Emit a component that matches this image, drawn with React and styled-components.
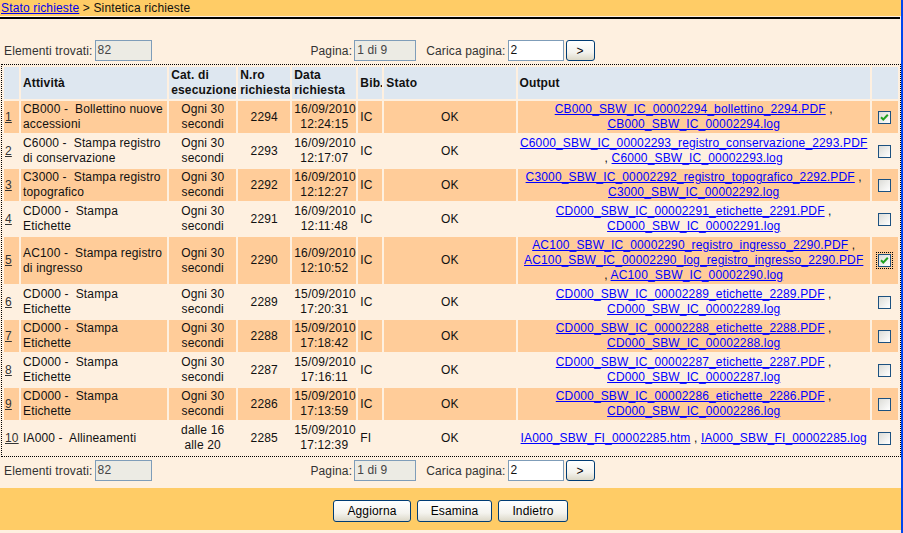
import React from "react";
import styled, { createGlobalStyle } from "styled-components";

const Global = createGlobalStyle`
  html, body { margin: 0; padding: 0; }
  body {
    background: #fef0e0;
    font-family: "Liberation Sans", Arial, sans-serif;
    font-size: 12px;
    letter-spacing: 0.15px;
    color: #111;
  }
`;

const Page = styled.div`
  width: 901px;
  min-height: 533px;
  border-right: 2px solid #0046ee;
  background: #fef0e0;
  display: flex;
  flex-direction: column;
`;

const TopBar = styled.div`
  height: 16px;
  background: #ffcc66;
  line-height: 16px;
  padding-left: 1px;
  white-space: nowrap;
`;

const Rule = styled.div`
  margin-top: 1px;
  height: 2px;
  width: 900px;
  background: #000;
`;

const CrumbLink = styled.a`
  color: #0000ee;
  text-decoration: underline;
`;

const Controls = styled.div`
  display: grid;
  grid-template-columns: 1fr auto 1fr;
  align-items: center;
  height: 21px;
  margin-top: ${(p) => p.$top}px;
  padding-left: 4px;
`;

const Group = styled.div`
  display: flex;
  align-items: center;
`;

const Label = styled.span`
  color: #333;
  margin-right: 2px;
  margin-left: ${(p) => p.$ml || 0}px;
  white-space: nowrap;
`;

const Field = styled.div`
  box-sizing: border-box;
  width: ${(p) => p.$w}px;
  height: 21px;
  border: 1px solid #7f9db9;
  background: ${(p) => (p.$ro ? "#ecebe4" : "#ffffff")};
  color: ${(p) => (p.$ro ? "#444" : "#111")};
  line-height: 19px;
  padding-left: 2px;
  font-size: 12px;
`;

const Btn = styled.button`
  box-sizing: border-box;
  height: ${(p) => p.$h || 22}px;
  width: ${(p) => (p.$w ? p.$w + "px" : "auto")};
  padding: 0 ${(p) => (p.$w ? 0 : 13)}px;
  border: 1px solid #003c74;
  border-radius: 3px;
  background: linear-gradient(#ffffff, #f4f3ee 60%, #dcd8c8);
  font-family: "Liberation Sans", Arial, sans-serif;
  font-size: 12px;
  letter-spacing: 0.15px;
  color: #000;
  margin-left: ${(p) => p.$ml || 0}px;
`;

const Table = styled.table`
  margin-top: 3px;
  margin-left: 1px;
  width: 900px;
  table-layout: fixed;
  border: 1px dotted #000;
  border-spacing: 2px;
  border-collapse: separate;
`;

const Th = styled.th`
  background: #dee7f0;
  font-weight: bold;
  text-align: left;
  vertical-align: middle;
  padding: 1px 2px;
  line-height: 15px;
  height: 30px;
  white-space: nowrap;
  overflow: hidden;
`;

const Tr = styled.tr`
  background: ${(p) => (p.$odd ? "#ffcc99" : "#fef0e0")};
`;

const Td = styled.td`
  padding: 1px ${(p) => (p.$tight ? 1 : 2)}px;
  line-height: 15px;
  height: 30px;
  vertical-align: middle;
  text-align: ${(p) => p.$align || "left"};
  white-space: nowrap;
  overflow: visible;
`;

const IndexLink = styled.a`
  color: #333;
  text-decoration: underline;
`;

const OutLink = styled.a`
  color: #0000ff;
  text-decoration: underline;
`;

const Line = styled.div`
  white-space: nowrap;
`;

const Box = styled.span`
  display: inline-block;
  box-sizing: border-box;
  width: 13px;
  height: 13px;
  border: 1px solid #1c5180;
  background: linear-gradient(135deg, #dcdcd7, #ffffff);
  vertical-align: middle;
  outline: ${(p) => (p.$focus ? "1px dotted #000" : "none")};
  outline-offset: 1px;
  position: relative;
`;

const ActionBar = styled.div`
  margin-top: 7px;
  height: 42px;
  background: #ffcc66;
  display: flex;
  justify-content: center;
  align-items: flex-start;
  padding-top: 12px;
  box-sizing: border-box;
  gap: 6px;
`;

const Check = ({ checked, focus }) => (
  <Box $focus={focus}>
    {checked && (
      <svg width="11" height="11" viewBox="0 0 11 11" style={{ position: "absolute", left: 0, top: 0 }}>
        <path d="M2 5.2 L4.3 7.5 L8.8 2.8" stroke="#21a121" strokeWidth="2" fill="none" />
      </svg>
    )}
  </Box>
);

const rows = [
  {
    act: ["CB000 -\u00a0 Bollettino nuove", "accessioni"], cat: ["Ogni 30", "secondi"], n: "2294",
    d: ["16/09/2010", "12:24:15"], bib: "IC", checked: true,
    out: [["CB000_SBW_IC_00002294_bollettino_2294.PDF", ","], ["CB000_SBW_IC_00002294.log"]],
  },
  {
    act: ["C6000 -\u00a0 Stampa registro", "di conservazione"], cat: ["Ogni 30", "secondi"], n: "2293",
    d: ["16/09/2010", "12:17:07"], bib: "IC",
    out: [["C6000_SBW_IC_00002293_registro_conservazione_2293.PDF"], [",", "C6000_SBW_IC_00002293.log"]],
  },
  {
    act: ["C3000 -\u00a0 Stampa registro", "topografico"], cat: ["Ogni 30", "secondi"], n: "2292",
    d: ["16/09/2010", "12:12:27"], bib: "IC",
    out: [["C3000_SBW_IC_00002292_registro_topografico_2292.PDF", ","], ["C3000_SBW_IC_00002292.log"]],
  },
  {
    act: ["CD000 -\u00a0 Stampa", "Etichette"], cat: ["Ogni 30", "secondi"], n: "2291",
    d: ["16/09/2010", "12:11:48"], bib: "IC",
    out: [["CD000_SBW_IC_00002291_etichette_2291.PDF", ","], ["CD000_SBW_IC_00002291.log"]],
  },
  {
    act: ["AC100 -\u00a0 Stampa registro", "di ingresso"], cat: ["Ogni 30", "secondi"], n: "2290",
    d: ["16/09/2010", "12:10:52"], bib: "IC", checked: true, focus: true,
    out: [
      ["AC100_SBW_IC_00002290_registro_ingresso_2290.PDF", ","],
      ["AC100_SBW_IC_00002290_log_registro_ingresso_2290.PDF"],
      [",", "AC100_SBW_IC_00002290.log"],
    ],
  },
  {
    act: ["CD000 -\u00a0 Stampa", "Etichette"], cat: ["Ogni 30", "secondi"], n: "2289",
    d: ["15/09/2010", "17:20:31"], bib: "IC",
    out: [["CD000_SBW_IC_00002289_etichette_2289.PDF", ","], ["CD000_SBW_IC_00002289.log"]],
  },
  {
    act: ["CD000 -\u00a0 Stampa", "Etichette"], cat: ["Ogni 30", "secondi"], n: "2288",
    d: ["15/09/2010", "17:18:42"], bib: "IC",
    out: [["CD000_SBW_IC_00002288_etichette_2288.PDF", ","], ["CD000_SBW_IC_00002288.log"]],
  },
  {
    act: ["CD000 -\u00a0 Stampa", "Etichette"], cat: ["Ogni 30", "secondi"], n: "2287",
    d: ["15/09/2010", "17:16:11"], bib: "IC",
    out: [["CD000_SBW_IC_00002287_etichette_2287.PDF", ","], ["CD000_SBW_IC_00002287.log"]],
  },
  {
    act: ["CD000 -\u00a0 Stampa", "Etichette"], cat: ["Ogni 30", "secondi"], n: "2286",
    d: ["15/09/2010", "17:13:59"], bib: "IC",
    out: [["CD000_SBW_IC_00002286_etichette_2286.PDF", ","], ["CD000_SBW_IC_00002286.log"]],
  },
  {
    act: ["IA000 -\u00a0 Allineamenti"], cat: ["dalle 16", "alle 20"], n: "2285",
    d: ["15/09/2010", "17:12:39"], bib: "FI",
    out: [["IA000_SBW_FI_00002285.htm", ",", "IA000_SBW_FI_00002285.log"]],
  },
];

const Lines = ({ items }) => items.map((t, i) => <Line key={i}>{t}</Line>);

const OutLine = ({ parts }) => (
  <Line>
    {parts.map((p, i) => (
      <React.Fragment key={i}>
        {i > 0 && " "}
        {p === "," ? "," : <OutLink href="#">{p}</OutLink>}
      </React.Fragment>
    ))}
  </Line>
);

const ControlsRow = ({ top }) => (
  <Controls $top={top}>
    <Group>
      <Label>Elementi trovati:</Label>
      <Field $w={57} $ro>82</Field>
    </Group>
    <Group>
      <Label>Pagina:</Label>
      <Field $w={62} $ro>1 di 9</Field>
      <Label $ml={10}>Carica pagina:</Label>
      <Field $w={56}>2</Field>
      <Btn $w={29} $h={21} $ml={2}>&gt;</Btn>
    </Group>
    <div />
  </Controls>
);

const widths = [15, 146, 67, 52, 64, 24, 131, 352, 26];

export default function App() {
  return (
    <>
      <Global />
      <Page>
        <TopBar>
          <CrumbLink href="#">Stato richieste</CrumbLink> &gt; Sintetica richieste
        </TopBar>
        <Rule />
        <ControlsRow top={21} />
        <Table>
          <colgroup>
            {widths.map((w, i) => (
              <col key={i} style={{ width: w }} />
            ))}
          </colgroup>
          <thead>
            <tr>
              <Th />
              <Th>Attività</Th>
              <Th>Cat. di<br />esecuzione</Th>
              <Th>N.ro<br />richiesta</Th>
              <Th>Data<br />richiesta</Th>
              <Th>Bib.</Th>
              <Th>Stato</Th>
              <Th>Output</Th>
              <Th />
            </tr>
          </thead>
          <tbody>
            {rows.map((r, i) => (
              <Tr key={i} $odd={i % 2 === 0}>
                <Td $tight><IndexLink href="#">{i + 1}</IndexLink></Td>
                <Td><Lines items={r.act} /></Td>
                <Td $align="center"><Lines items={r.cat} /></Td>
                <Td $align="center">{r.n}</Td>
                <Td $align="center"><Lines items={r.d} /></Td>
                <Td>{r.bib}</Td>
                <Td $align="center">OK</Td>
                <Td $align="center">
                  {r.out.map((l, j) => (
                    <OutLine key={j} parts={l} />
                  ))}
                </Td>
                <Td $align="center"><Check checked={r.checked} focus={r.focus} /></Td>
              </Tr>
            ))}
          </tbody>
        </Table>
        <ControlsRow top={3} />
        <ActionBar>
          <Btn>Aggiorna</Btn>
          <Btn>Esamina</Btn>
          <Btn>Indietro</Btn>
        </ActionBar>
      </Page>
    </>
  );
}
